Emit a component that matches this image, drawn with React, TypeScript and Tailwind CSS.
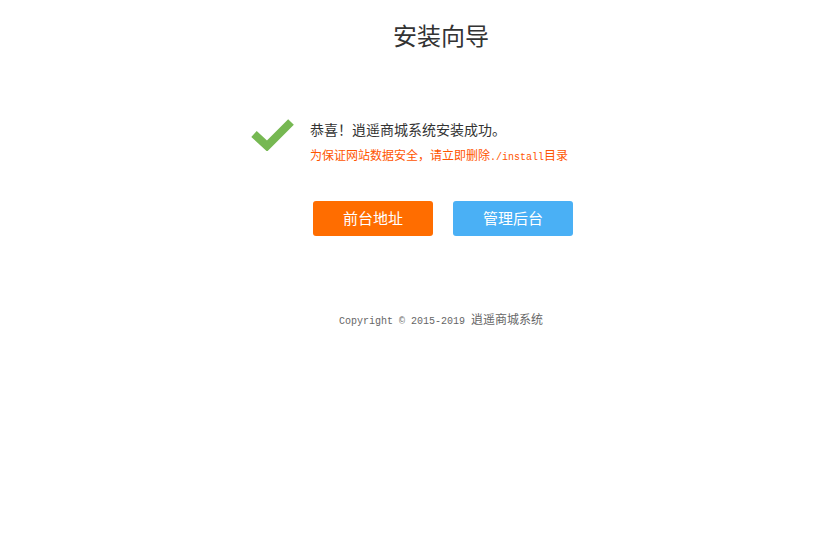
export default function App() {
  return (
    <div className="min-h-screen bg-white flex flex-col items-center pl-[45px] font-['Microsoft_YaHei','Noto_Sans_CJK_SC',sans-serif]">
      <h1 className="mt-[19px] text-[24px] leading-[32px] text-[#333]">安装向导</h1>

      <div className="mt-[66px] self-start ml-[206px] flex items-start">
        <svg width="44" height="34" viewBox="0 0 44 34" className="mr-[15px]">
          <path d="M3 17 L16 29 L40 5" fill="none" stroke="#76b852" strokeWidth="8" strokeLinejoin="miter" />
        </svg>
        <div className="flex flex-col">
          <p className="text-[14px] leading-[24px] text-[#333]">恭喜！逍遥商城系统安装成功。</p>
          <p className="mt-[5px] text-[12px] leading-[18px] text-[#ff5500]">
            为保证网站数据安全，请立即删除<span className="text-[10px] font-['Liberation_Mono',monospace]">./install</span>目录
          </p>
        </div>
      </div>

      <div className="mt-[34px] ml-[4px] flex gap-[20px]">
        <button className="w-[120px] h-[35px] rounded-[3px] bg-[#ff6d00] text-white text-[15px]">前台地址</button>
        <button className="w-[120px] h-[35px] rounded-[3px] bg-[#4ab0f5] text-white text-[15px]">管理后台</button>
      </div>

      <p className="mt-[75px] text-[10px] leading-[16px] text-[#666] font-['Liberation_Mono','Noto_Sans_CJK_SC',monospace]">
        Copyright © 2015-2019 <span className="text-[12px] font-['Noto_Sans_CJK_SC',sans-serif]">逍遥商城系统</span>
      </p>
    </div>
  );
}
